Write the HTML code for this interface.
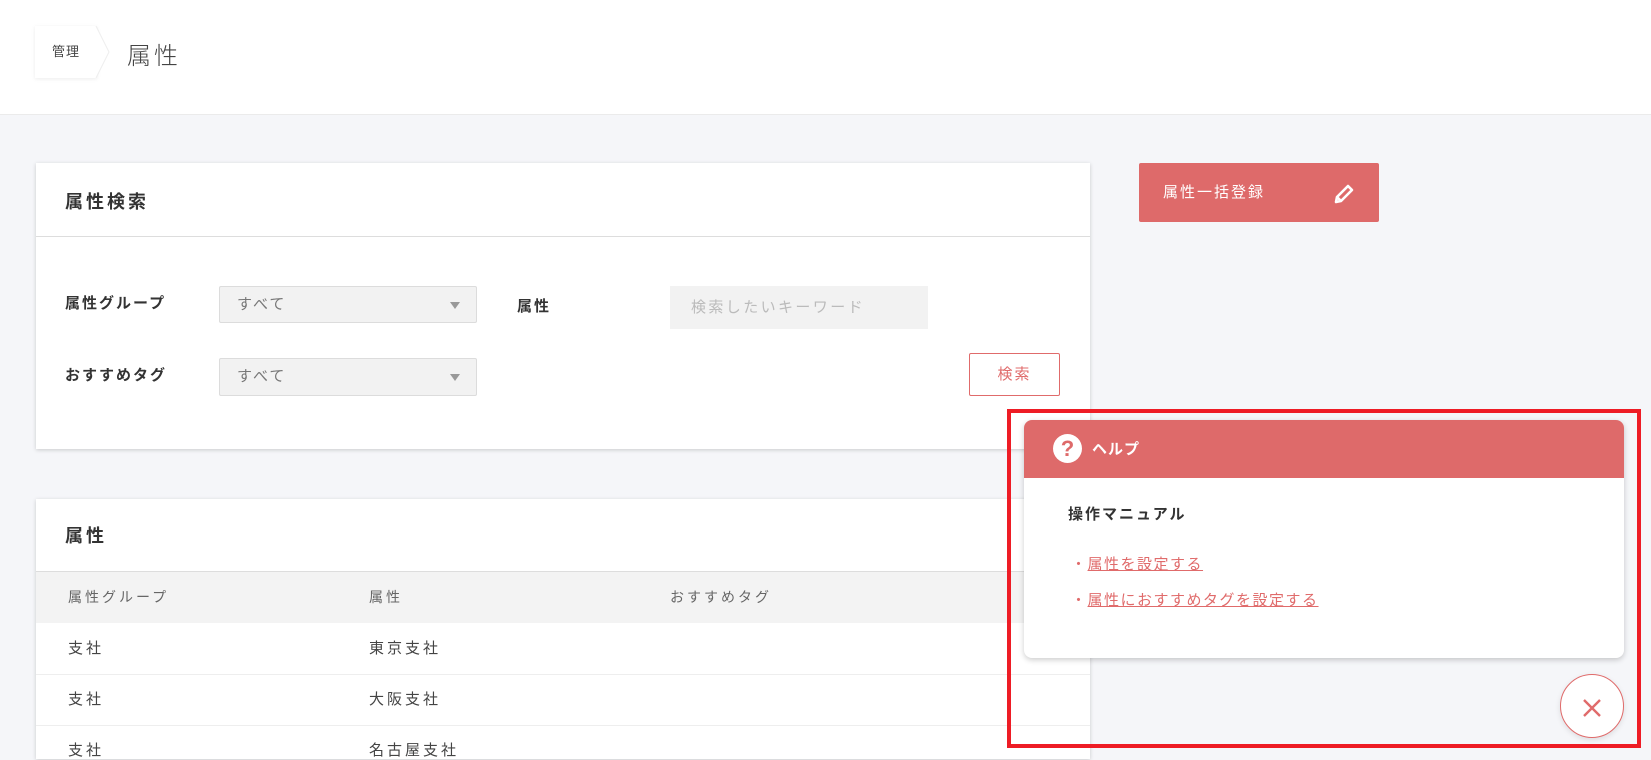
<!DOCTYPE html>
<html><head><meta charset="utf-8"><style>
*{box-sizing:border-box;margin:0;padding:0}
body{width:1651px;height:753px;overflow:hidden;background:#f5f6f9;font-family:"Liberation Sans","Noto Sans CJK JP",sans-serif;color:#333;position:relative}
.abs{position:absolute}
.hdr{left:0;top:0;width:1651px;height:115px;background:#fff;border-bottom:1px solid #ebebeb}
.bc{left:35px;top:26px;width:62px;height:52px;background:#fff;box-shadow:0 1px 4px rgba(0,0,0,.08);font-size:13px;line-height:52px;text-align:center;color:#444;letter-spacing:1px}
.card{background:#fff;box-shadow:0 1px 4px rgba(0,0,0,.18)}
.lbl{font-size:15px;font-weight:bold;letter-spacing:2px;color:#333}
.sel{background:#f2f2f2;border:1px solid #dcdcdc;border-radius:2px;font-size:15px;color:#777;padding-left:17px;line-height:35px;letter-spacing:2px}
.sel:after{content:"";position:absolute;right:16px;top:15px;border-left:5px solid transparent;border-right:5px solid transparent;border-top:7px solid #999}
.t{font-size:15px;color:#444;letter-spacing:3px}
.row{left:0;width:1054px;height:1px;background:#eee}
a{color:#e06b6b;text-decoration:underline}
</style></head><body>
<div class="abs hdr"></div>
<div class="abs bc">管理</div>
<svg class="abs" style="left:95px;top:26px" width="16" height="52"><path d="M1 0 L14 26 L1 52" fill="#fff" stroke="#eee"/></svg>
<div class="abs" style="left:127px;top:36px;font-size:24px;color:#444;font-weight:300;letter-spacing:3px">属性</div>

<div class="abs card" style="left:36px;top:163px;width:1054px;height:286px"></div>
<div class="abs lbl" style="left:65px;top:188px;font-size:18px;letter-spacing:3px">属性検索</div>
<div class="abs" style="left:36px;top:236px;width:1054px;height:1px;background:#ddd"></div>
<div class="abs lbl" style="left:65px;top:292px">属性グループ</div>
<div class="abs sel" style="left:219px;top:286px;width:258px;height:37px">すべて</div>
<div class="abs lbl" style="left:517px;top:295px">属性</div>
<div class="abs" style="left:670px;top:286px;width:258px;height:43px;background:#f2f2f2;font-size:15px;color:#bbb;padding-left:21px;line-height:43px;letter-spacing:2.4px">検索したいキーワード</div>
<div class="abs lbl" style="left:65px;top:364px">おすすめタグ</div>
<div class="abs sel" style="left:219px;top:358px;width:258px;height:38px">すべて</div>
<div class="abs" style="left:969px;top:353px;width:91px;height:43px;border:1px solid #e06b6b;border-radius:2px;background:#fff;color:#e06b6b;font-size:15px;text-align:center;line-height:41px;letter-spacing:2px">検索</div>

<div class="abs" style="left:1139px;top:163px;width:240px;height:59px;background:#de6a6a;border-radius:2px;color:#fff;font-size:15px;line-height:59px;padding-left:24px;letter-spacing:2px">属性一括登録</div>
<svg class="abs" style="left:1333px;top:183px" width="24" height="22" viewBox="0 0 24 22"><path d="M3 19 L4 14 L15 3 L19 7 L8 18 Z M4 14 L8 18" fill="none" stroke="#fff" stroke-width="2.6" stroke-linejoin="round"/></svg>

<div class="abs card" style="left:36px;top:499px;width:1054px;height:260px"></div>
<div class="abs lbl" style="left:65px;top:522px;font-size:18px;letter-spacing:3px">属性</div>
<div class="abs" style="left:36px;top:571px;width:1054px;height:52px;background:#f3f3f3;border-top:1px solid #ddd"></div>
<div class="abs t" style="left:68px;top:587px;font-size:14px;color:#666">属性グループ</div>
<div class="abs t" style="left:369px;top:587px;font-size:14px;color:#666">属性</div>
<div class="abs t" style="left:670px;top:587px;font-size:14px;color:#666">おすすめタグ</div>
<div class="abs t" style="left:68px;top:637px">支社</div><div class="abs t" style="left:369px;top:637px">東京支社</div>
<div class="abs row" style="left:36px;top:674px"></div>
<div class="abs t" style="left:68px;top:688px">支社</div><div class="abs t" style="left:369px;top:688px">大阪支社</div>
<div class="abs row" style="left:36px;top:725px"></div>
<div class="abs t" style="left:68px;top:739px">支社</div><div class="abs t" style="left:369px;top:739px">名古屋支社</div>

<div class="abs card" style="left:1024px;top:420px;width:600px;height:238px;border-radius:8px;overflow:hidden;box-shadow:0 2px 6px rgba(0,0,0,.2)">
<div style="height:58px;background:#de6a6a"></div>
</div>
<div class="abs" style="left:1053px;top:434px;width:29px;height:29px;border-radius:50%;background:#fff;color:#de6a6a;font-weight:bold;font-size:22px;text-align:center;line-height:29px">?</div>
<div class="abs" style="left:1092px;top:438px;color:#fff;font-weight:bold;font-size:15px;letter-spacing:1px">ヘルプ</div>
<div class="abs" style="left:1068px;top:503px;font-weight:bold;font-size:15px;color:#333;letter-spacing:2px">操作マニュアル</div>
<div class="abs" style="left:1071px;top:553px;font-size:15px;color:#e06b6b;letter-spacing:1.5px">・<a>属性を設定する</a></div>
<div class="abs" style="left:1071px;top:589px;font-size:15px;color:#e06b6b;letter-spacing:1.5px">・<a>属性におすすめタグを設定する</a></div>
<div class="abs" style="left:1560px;top:674px;width:64px;height:64px;border-radius:50%;background:#fff;border:1px solid #e06b6b;box-shadow:0 2px 6px rgba(0,0,0,.1)"></div>
<svg class="abs" style="left:1581px;top:697px" width="22" height="22"><path d="M3 3 L19 19 M19 3 L3 19" stroke="#e06b6b" stroke-width="2.4"/></svg>

<div class="abs" style="left:1007px;top:409px;width:634px;height:339px;border:4px solid #ee1c25"></div>
</body></html>
